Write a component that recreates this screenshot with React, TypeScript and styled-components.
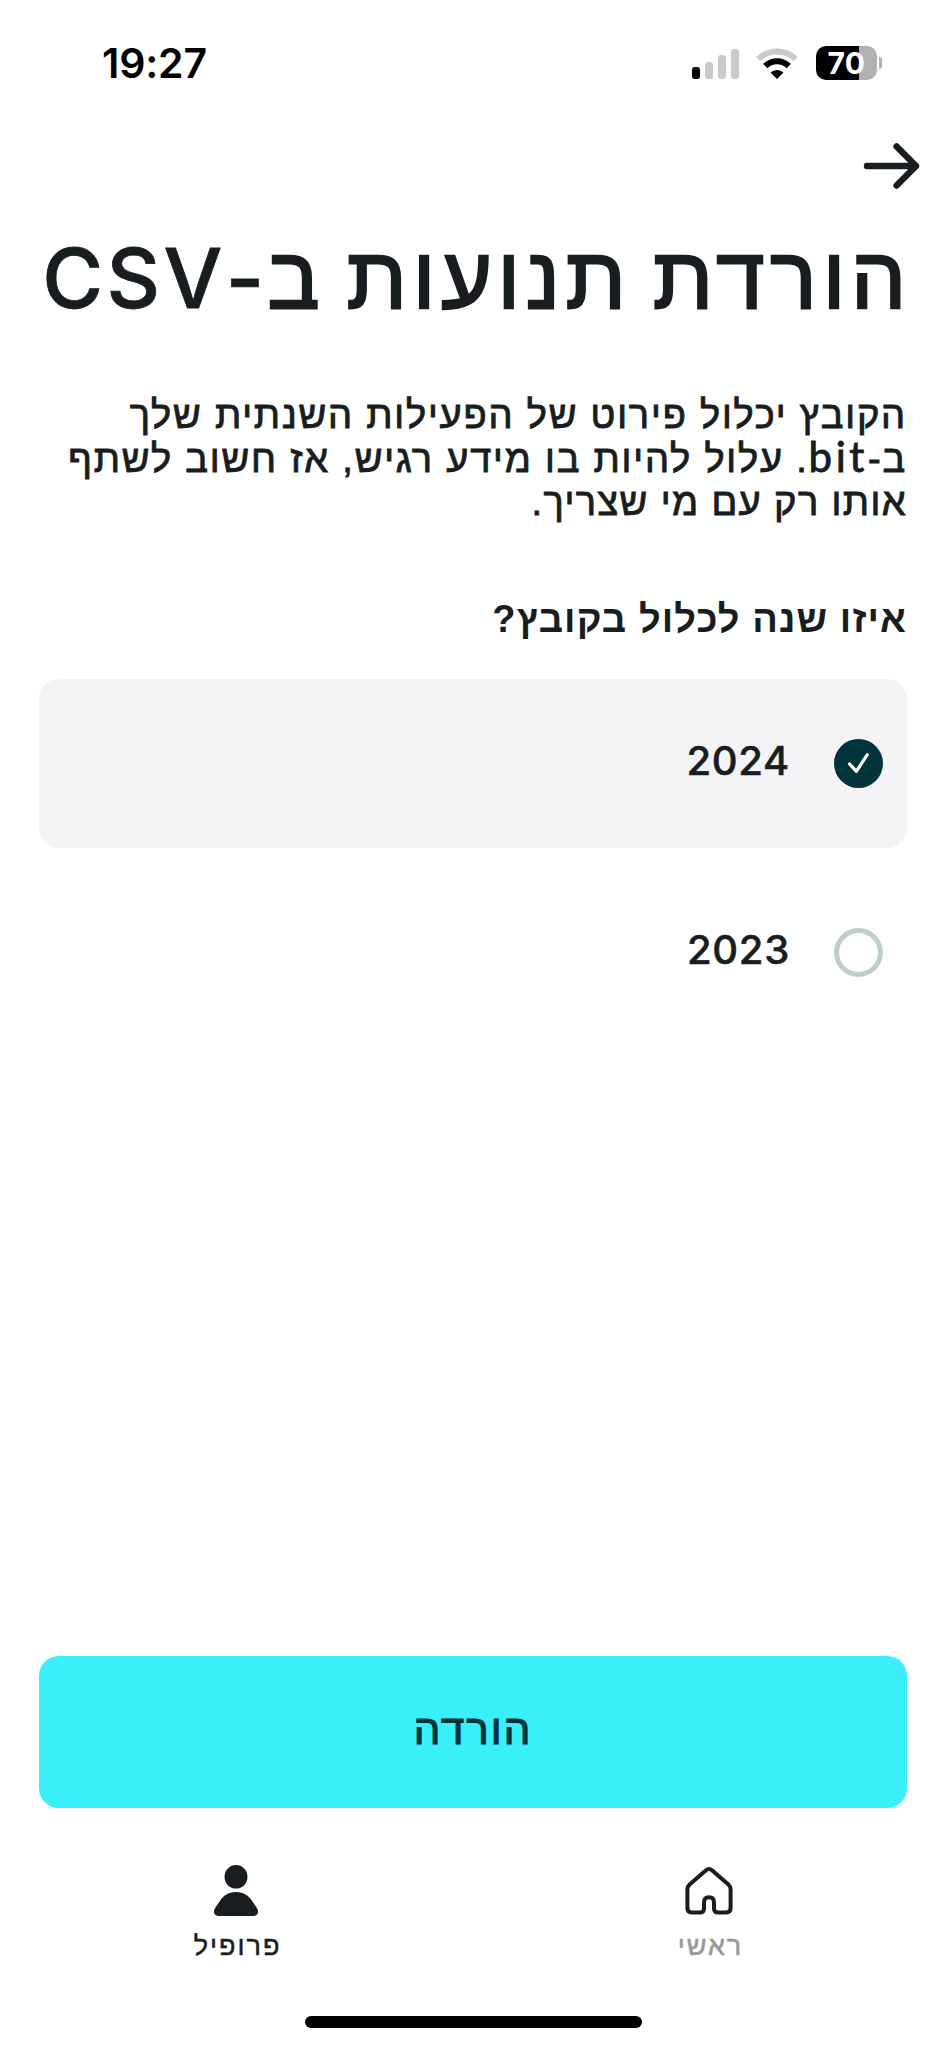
import React from 'react';
import styled, { createGlobalStyle } from 'styled-components';

const INK = '#181d20';
const TEAL = '#00343a';
const HEBREW = "'Liberation Sans', Arial, sans-serif";
const LATIN = "Inter, 'Liberation Sans', sans-serif";

const GlobalStyle = createGlobalStyle`
  * { box-sizing: border-box; }
  body { margin: 0; background: #fff; }
`;

const Screen = styled.div`
  width: 946px;
  height: 2048px;
  display: flex;
  flex-direction: column;
  overflow: hidden;
  background: #fff;
  color: ${INK};
  font-family: ${HEBREW};
`;

const StatusBar = styled.header`
  height: 126px;
  display: flex;
  justify-content: space-between;
  padding: 0 64px 0 102px;
`;

const Clock = styled.time`
  height: 126px;
  font: 600 41px/126px ${LATIN};
  letter-spacing: -0.2px;
  color: #000;
`;

const Indicators = styled.div`
  display: flex;
  align-items: center;
  height: 126px;
`;

const SignalIcon = styled.svg`
  width: 48px;
  height: 32px;
  margin-right: 16px;
`;

const WifiIcon = styled.svg`
  width: 42px;
  height: 32px;
  margin-right: 18px;
`;

const Battery = styled.div`
  width: 61px;
  height: 34px;
  border-radius: 10px;
  background: linear-gradient(to right, #000 43px, #b1b1b1 43px);
  color: #fff;
  font: 700 30px/34px ${LATIN};
  letter-spacing: 0.4px;
  text-align: center;
`;

const BatteryCap = styled.span`
  width: 3px;
  height: 12px;
  margin-left: 2px;
  border-radius: 0 4px 4px 0;
  background: #b1b1b1;
`;

const BackBar = styled.nav`
  height: 102px;
  display: flex;
  padding: 14px 25px 0 0;
  justify-content: flex-end;
`;

const BackButton = styled.button`
  width: 60px;
  height: 52px;
  padding: 0;
  border: 0;
  background: none;
`;

const Content = styled.main`
  flex: 1;
  direction: rtl;
  padding: 0 39px;
  display: flex;
  flex-direction: column;
`;

const Title = styled.h1`
  margin: 0 -5px 0 0;
  height: 100px;
  font: 400 87px/100px ${HEBREW};
  letter-spacing: 5.8px;
  word-spacing: -8.5px;
  white-space: nowrap;
  -webkit-text-stroke: 2.4px ${INK};
`;

const TitleLatin = styled.span`
  font: 500 83px/1 ${LATIN};
  letter-spacing: 3.4px;
  -webkit-text-stroke: 0.8px ${INK};
`;

const Description = styled.p`
  margin: 66px 0 0;
  font: 400 38px/43.6px ${HEBREW};
  white-space: nowrap;
  -webkit-text-stroke: 0.9px ${INK};
`;

const Line = styled.span<{ $spacing: number }>`
  display: block;
  letter-spacing: ${(p) => p.$spacing}px;
`;

const Brand = styled.span`
  font: 400 42px/36px Lato, sans-serif;
  letter-spacing: 3.6px;
`;

const Question = styled.h2`
  margin: 72px 0 0;
  font: 700 38px/44px ${HEBREW};
  letter-spacing: 1.1px;
`;

const Options = styled.div`
  display: flex;
  flex-direction: column;
  gap: 20px;
  margin-top: 38px;
`;

const Option = styled.div<{ $selected: boolean }>`
  height: 169px;
  display: flex;
  align-items: center;
  padding: 0 24px;
  gap: 44px;
  border-radius: 20px;
  background: ${(p) => (p.$selected ? '#f4f4f7' : 'transparent')};
`;

const Radio = styled.span<{ $selected: boolean }>`
  width: 49px;
  height: 49px;
  border-radius: 50%;
  border: ${(p) => (p.$selected ? '0' : '5px solid #bfcecd')};
  background: ${(p) => (p.$selected ? TEAL : '#fff')};
  display: flex;
`;

const Year = styled.span`
  padding-bottom: 4px;
  font: 500 40px/48px ${LATIN};
  letter-spacing: 0.7px;
  direction: ltr;
  -webkit-text-stroke: 0.5px ${INK};
`;

const DownloadButton = styled.button`
  height: 152px;
  margin: 0 39px;
  padding: 0 0 4px;
  border: 0;
  border-radius: 20px;
  background: #38effa;
  color: ${TEAL};
  direction: rtl;
  font: 400 42px/1 ${HEBREW};
  letter-spacing: 2px;
  -webkit-text-stroke: 1.2px ${TEAL};
`;

const TabBar = styled.nav`
  height: 208px;
  direction: rtl;
  display: flex;
`;

const Tab = styled.a<{ $active: boolean }>`
  flex: 1;
  display: flex;
  flex-direction: column;
  align-items: center;
  padding: 54px 0 0 2px;
  color: ${(p) => (p.$active ? INK : '#98989a')};
  font: 400 27px/32px ${HEBREW};
  letter-spacing: 2px;
  -webkit-text-stroke: 0.5px currentColor;
`;

const TabIcon = styled.svg`
  width: 56px;
  height: 56px;
  margin: 0 4px 12px 0;
`;

const HomeIndicator = styled.div`
  width: 337px;
  height: 12px;
  margin: 0 auto 20px;
  border-radius: 6px;
  background: #000;
`;

const years = [
  { year: '2024', selected: true },
  { year: '2023', selected: false },
];

export default function App() {
  return (
    <Screen>
      <GlobalStyle />
      <StatusBar>
        <Clock>19:27</Clock>
        <Indicators>
          <SignalIcon viewBox="0 0 48 32">
            <rect x="0" y="20" width="8" height="12" rx="3" fill="#000" />
            <rect x="13" y="15" width="8" height="17" rx="3" fill="#cacaca" />
            <rect x="26" y="8" width="8" height="24" rx="3" fill="#cacaca" />
            <rect x="39" y="2" width="8" height="30" rx="3" fill="#cacaca" />
          </SignalIcon>
          <WifiIcon viewBox="0 0 42 32" fill="none">
            <path d="M2.2 12.2a27 27 0 0 1 37.6 0" stroke="#cacaca" strokeWidth="6" />
            <path d="M9.2 19a17 17 0 0 1 23.6 0" stroke="#000" strokeWidth="6" />
            <path d="M14.5 25.6a9.3 9.3 0 0 1 13 0L21 32z" fill="#000" />
          </WifiIcon>
          <Battery>70</Battery>
          <BatteryCap />
        </Indicators>
      </StatusBar>
      <BackBar>
        <BackButton aria-label="חזרה">
          <svg width="60" height="52" viewBox="0 0 60 52" fill="none" stroke={INK} strokeWidth="6.4" strokeLinecap="round" strokeLinejoin="round">
            <path d="M6 26h49M35.600 6.500L55 26L35.600 45.500" />
          </svg>
        </BackButton>
      </BackBar>
      <Content>
        <Title>
          הורדת תנועות ב<TitleLatin>-CSV</TitleLatin>
        </Title>
        <Description>
          <Line $spacing={1.8}>הקובץ יכלול פירוט של הפעילות השנתית שלך</Line>
          <Line $spacing={1.8}>
            ב-<Brand>bit</Brand>. עלול להיות בו מידע רגיש, אז חשוב לשתף
          </Line>
          <Line $spacing={1.4}>אותו רק עם מי שצריך.</Line>
        </Description>
        <Question>איזו שנה לכלול בקובץ?</Question>
        <Options>
          {years.map(({ year, selected }) => (
            <Option key={year} $selected={selected}>
              <Radio $selected={selected}>
                {selected && (
                  <svg width="49" height="49" viewBox="0 0 49 49" fill="none" stroke="#fff" strokeWidth="3.2" strokeLinecap="round" strokeLinejoin="round">
                    <path d="M15.6 25L22.4 32.3L33.2 15.8" />
                  </svg>
                )}
              </Radio>
              <Year>{year}</Year>
            </Option>
          ))}
        </Options>
      </Content>
      <DownloadButton>הורדה</DownloadButton>
      <TabBar>
        <Tab $active={false}>
          <TabIcon viewBox="0 0 56 56" fill="none" stroke={INK} strokeWidth="4" strokeLinejoin="round">
            <path d="M25 8.2L8.600 22.400Q6.400 24.400 6.400 27.200V46Q6.400 50.400 10.600 50.400H19Q23 50.400 23 46.400V40.400Q23 35.200 28 35.200Q33 35.200 33 40.400V46.400Q33 50.400 37 50.400H45.400Q49.600 50.400 49.600 46V27.200Q49.600 24.400 47.400 22.400L31 8.200Q28 5.800 25 8.200Z" />
          </TabIcon>
          ראשי
        </Tab>
        <Tab $active>
          <TabIcon viewBox="0 0 56 56" fill={INK}>
            <ellipse cx="28" cy="14.8" rx="11.5" ry="11.8" />
            <path d="M28 30C36 30 41 34 44.500 39.500L49 46.200C51.500 50 49.500 54 45.500 54H10.500C6.500 54 4.500 50 7 46.200L11.500 39.500C15 34 20 30 28 30Z" />
          </TabIcon>
          פרופיל
        </Tab>
      </TabBar>
      <HomeIndicator />
    </Screen>
  );
}
